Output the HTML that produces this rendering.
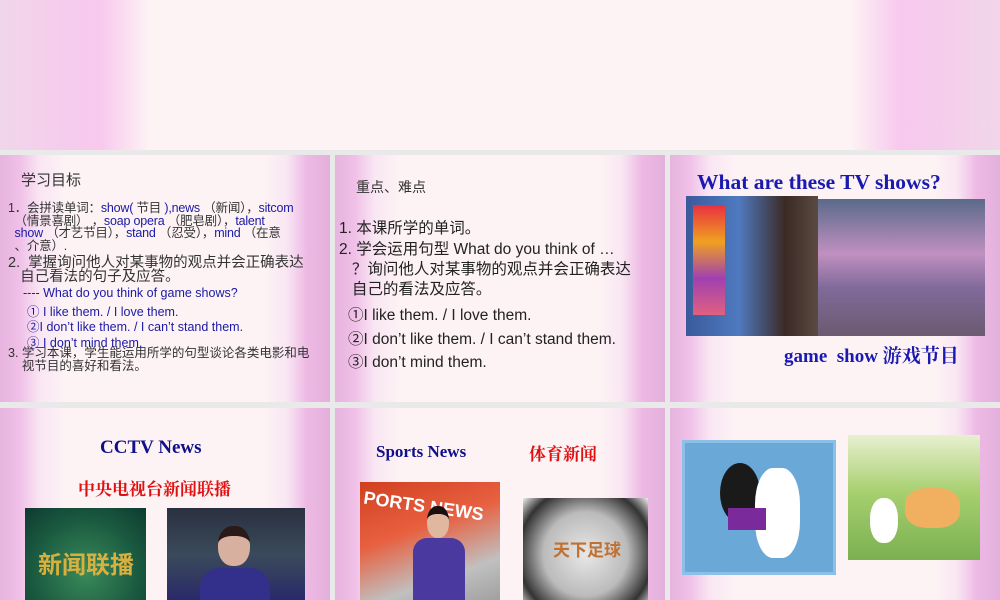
<!DOCTYPE html>
<html><head><meta charset="utf-8"><style>
*{margin:0;padding:0;box-sizing:border-box}
body{width:1000px;height:600px;position:relative;overflow:hidden;background:#e9e9e9;font-family:"Liberation Sans","Noto Sans CJK SC",sans-serif}
.s{position:absolute;overflow:hidden;background:linear-gradient(90deg,#e6b4de 0%,#f0c0e8 6%,#f9e6f3 12%,#fdf3f4 20%,#fdf3f4 80%,#f9e6f3 87%,#edb9e4 93%,#e3b0dc 100%)}
.a{position:absolute;white-space:nowrap}
.b{color:#1a1aa6}
.serif{font-family:"Liberation Serif","Noto Serif CJK SC",serif;font-weight:bold}
</style></head><body>
<div class="s" style="left:0;top:0;width:1000px;height:150px;background:linear-gradient(90deg,#f1d6ea 0%,#f5cdec 6%,#f8c8ee 10%,#fdf3f4 15%,#fdf3f4 85%,#f8c8ee 90%,#f5cdec 94%,#f1d6ea 100%)"></div>

<!-- slide 1 -->
<div class="s" style="left:0;top:155px;width:330px;height:247px">
<div class="a" style="left:21px;top:14px;font-size:15px;color:#333">学习目标</div>
<div class="a" style="left:8px;top:47px;font-size:12.5px;line-height:12.5px;color:#333;letter-spacing:-0.2px">1．会拼读单词：<span class="b">show(</span> 节目 <span class="b">),news</span> （新闻），<span class="b">sitcom</span><br>&nbsp;&nbsp;（情景喜剧） ，<span class="b">soap opera</span> （肥皂剧），<span class="b">talent</span><br>&nbsp;&nbsp;<span class="b">show</span> （才艺节目），<span class="b">stand</span> （忍受），<span class="b">mind</span> （在意<br>&nbsp;&nbsp;、介意）.</div>
<div class="a" style="left:8px;top:101px;font-size:14.5px;line-height:14px;color:#333">2.&nbsp; 掌握询问他人对某事物的观点并会正确表达<br>&nbsp;&nbsp;&nbsp;自己看法的句子及应答。</div>
<div class="a b" style="left:23px;top:131px;font-size:12.5px">---- What do you think of game shows?</div>
<div class="a b" style="left:27px;top:146px;font-size:12.5px">① I like them. / I love them.</div>
<div class="a b" style="left:27px;top:161px;font-size:12.5px">②I don’t like them. / I can’t stand them.</div>
<div class="a b" style="left:27px;top:177px;font-size:12.5px">③ I don’t mind them.</div>
<div class="a" style="left:8px;top:192px;font-size:12.5px;line-height:12.5px;color:#333">3. 学习本课，学生能运用所学的句型谈论各类电影和电<br>&nbsp;&nbsp;&nbsp;&nbsp;视节目的喜好和看法。</div>
</div>

<!-- slide 2 -->
<div class="s" style="left:335px;top:155px;width:330px;height:247px">
<div class="a" style="left:21px;top:22px;font-size:14px;color:#333">重点、难点</div>
<div class="a" style="left:4px;top:61px;font-size:15.5px;color:#222">1. 本课所学的单词。</div>
<div class="a" style="left:4px;top:85px;font-size:15.5px;line-height:20px;color:#222">2. 学会运用句型 What do you think of …<br>&nbsp;&nbsp;&nbsp;？询问他人对某事物的观点并会正确表达<br>&nbsp;&nbsp;&nbsp;自己的看法及应答。</div>
<div class="a" style="left:13px;top:148px;font-size:15.5px;color:#222">①I like them. / I love them.</div>
<div class="a" style="left:13px;top:172px;font-size:15.5px;color:#222">②I don’t like them. / I can’t stand them.</div>
<div class="a" style="left:13px;top:195px;font-size:15.5px;color:#222">③I don’t mind them.</div>
</div>

<!-- slide 3 -->
<div class="s" style="left:670px;top:155px;width:330px;height:247px">
<div class="a serif" style="left:27px;top:15px;font-size:21.5px;color:#1a1ab0">What are these TV shows?</div>
<div class="a" style="left:16px;top:41px;width:132px;height:140px;background:linear-gradient(90deg,#3a5a9a,#4f7ac0 40%,#3b2a25 75%,#5a4a40)"></div>
<div class="a" style="left:23px;top:50px;width:32px;height:110px;background:linear-gradient(#e83040,#f0a020,#a040b0,#e06080)"></div>
<div class="a" style="left:148px;top:44px;width:167px;height:137px;background:linear-gradient(180deg,#5a6a8a 0%,#c090c0 40%,#806a9a 65%,#6b5a70 100%)"></div>
<div class="a serif" style="left:114px;top:186px;font-size:19px;color:#1a1ab0">game&nbsp; show 游戏节目</div>
</div>

<!-- slide 4 -->
<div class="s" style="left:0;top:408px;width:330px;height:192px">
<div class="a serif" style="left:100px;top:29px;font-size:19px;color:#10108a">CCTV News</div>
<div class="a serif" style="left:78px;top:67px;font-size:17px;color:#e01010">中央电视台新闻联播</div>
<div class="a" style="left:25px;top:100px;width:121px;height:92px;background:radial-gradient(circle at 50% 70%,#3a8a5a,#1a5a40 60%,#0e3a30)"></div>
<div class="a" style="left:38px;top:137px;font-size:24px;font-weight:bold;color:#d8b040;font-family:'Noto Sans CJK SC',sans-serif">新闻联播</div>
<div class="a" style="left:167px;top:100px;width:138px;height:92px;background:linear-gradient(180deg,#2a3040,#3a4a5a 50%,#2a2a6a)"></div>
<div class="a" style="left:200px;top:160px;width:70px;height:32px;background:#32308a;border-radius:20px 20px 0 0"></div>
<div class="a" style="left:218px;top:118px;width:32px;height:40px;background:#d8b0a0;border-radius:45%;border-top:10px solid #2a1a1a"></div>
</div>

<!-- slide 5 -->
<div class="s" style="left:335px;top:408px;width:330px;height:192px">
<div class="a serif" style="left:41px;top:34px;font-size:17px;color:#10108a">Sports News</div>
<div class="a serif" style="left:194px;top:32px;font-size:17px;color:#e01010">体育新闻</div>
<div class="a" style="left:25px;top:74px;width:140px;height:118px;background:linear-gradient(160deg,#d04020,#e86040 40%,#c0c0c0 75%,#a0a0a0)"></div>
<div class="a" style="left:28px;top:88px;font-size:18px;font-weight:bold;color:#fff;transform:rotate(8deg)">PORTS NEWS</div>
<div class="a" style="left:78px;top:130px;width:52px;height:62px;background:#4a3aa0;border-radius:14px 14px 0 0"></div>
<div class="a" style="left:92px;top:98px;width:22px;height:32px;background:#e0b8a0;border-radius:45%;border-top:8px solid #1a1010"></div>
<div class="a" style="left:188px;top:90px;width:125px;height:102px;background:radial-gradient(circle at 50% 55%,#e8e8e8,#bbb 50%,#333 80%,#eee)"></div>
<div class="a" style="left:218px;top:128px;font-size:17px;font-weight:bold;color:#c07030;font-family:'Noto Sans CJK SC',sans-serif">天下足球</div>
</div>

<!-- slide 6 -->
<div class="s" style="left:670px;top:408px;width:330px;height:192px">
<div class="a" style="left:12px;top:32px;width:154px;height:135px;background:#6aa8d8;border:3px solid #8cc0e8"></div>
<div class="a" style="left:50px;top:55px;width:40px;height:60px;background:#1a1a1a;border-radius:50%"></div>
<div class="a" style="left:85px;top:60px;width:45px;height:90px;background:#fff;border-radius:40%"></div>
<div class="a" style="left:58px;top:100px;width:38px;height:22px;background:#7a2a9a"></div>
<div class="a" style="left:178px;top:27px;width:132px;height:125px;background:linear-gradient(180deg,#e8f0d0,#a8d070 45%,#7ab050)"></div>
<div class="a" style="left:235px;top:80px;width:55px;height:40px;background:#f0b060;border-radius:40%"></div>
<div class="a" style="left:200px;top:90px;width:28px;height:45px;background:#fff;border-radius:45%"></div>
</div>
</body></html>
